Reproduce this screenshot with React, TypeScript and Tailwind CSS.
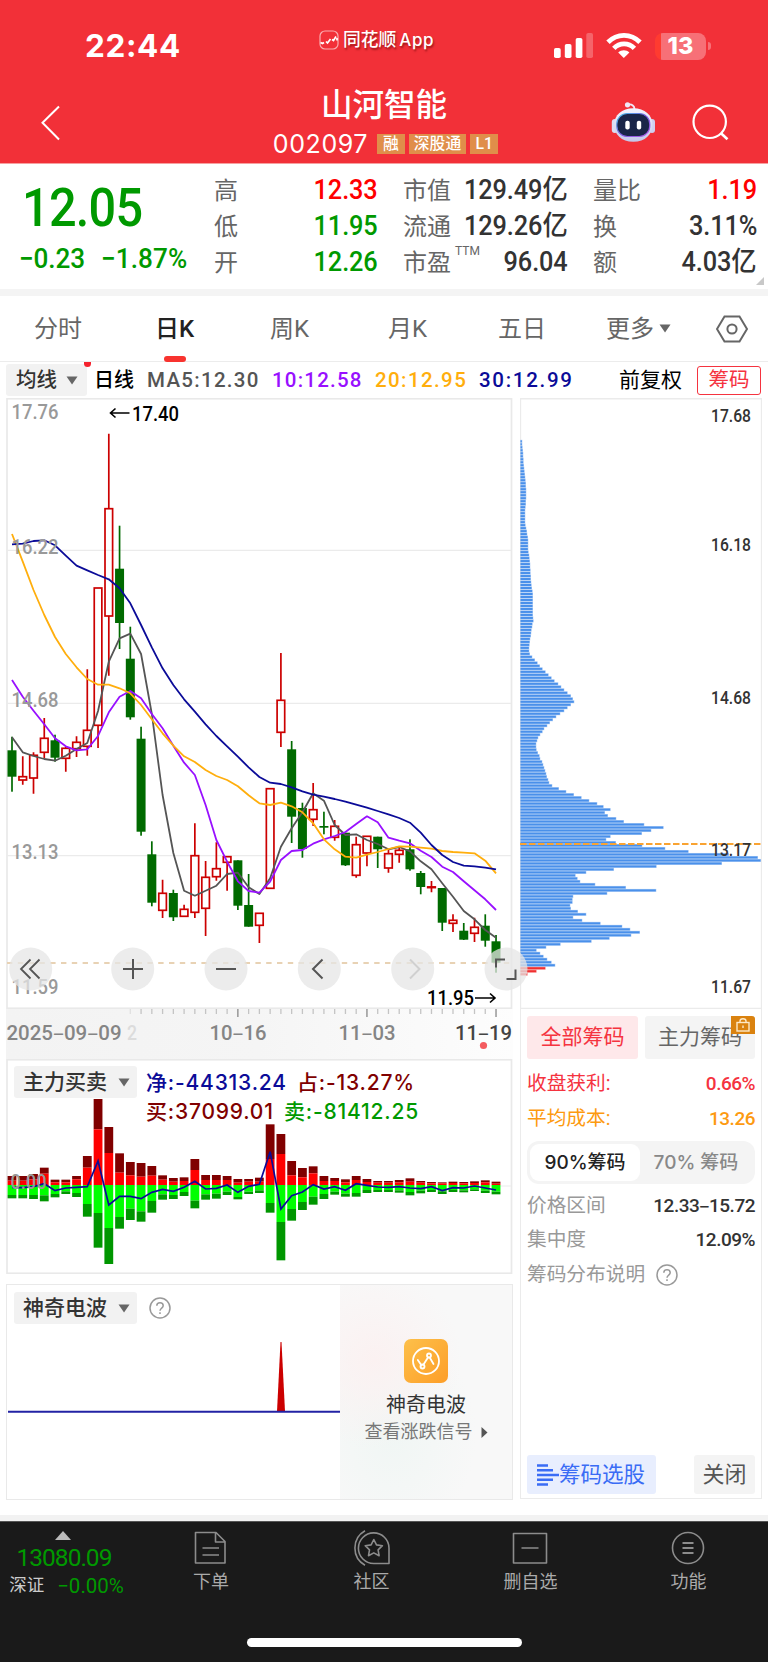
import clsx from "clsx"

type Candle = [kind: 'R' | 'G', high: number, top: number, bottom: number, low: number]

const STEP = 10.756
const cx = (i: number) => 12 + i * STEP

const candles: Candle[] = [
  ['G', 736.7, 750.3, 776.7, 791.7], ['R', 756.3, 776.7, 780, 784.7], ['R', 752.3, 755.3, 778, 793.7],
  ['R', 718, 738.3, 752.3, 758.3], ['G', 734.7, 740.3, 757.7, 761.7], ['R', 746.7, 748.3, 758.3, 771.7],
  ['R', 736.3, 742.3, 748.7, 757], ['R', 669.3, 730.3, 746.3, 755.7], ['R', 588, 588, 725.3, 748],
  ['R', 433.7, 508.7, 616, 675.7], ['G', 525.7, 568.7, 623, 649], ['G', 626.7, 658.7, 717.3, 719.7],
  ['G', 726.7, 738.7, 831.7, 835.7], ['G', 841.3, 854.3, 902.7, 906.3], ['R', 879.7, 893.3, 910.3, 918],
  ['G', 889.7, 893, 917.3, 921], ['R', 904.7, 909.3, 916.3, 917], ['R', 823.3, 855.7, 912.3, 918],
  ['R', 861, 877.3, 908.3, 936], ['R', 842.3, 868.7, 876.7, 880.7], ['R', 856, 856.7, 862.3, 890.7],
  ['G', 860.3, 860.3, 905.7, 910], ['G', 874, 905, 926.7, 926.7], ['R', 913.3, 913.3, 925.3, 943],
  ['R', 788.7, 788.7, 888.3, 888.3], ['R', 653, 700.3, 732.3, 747], ['G', 741, 749.3, 816.7, 843],
  ['G', 802.7, 808, 849, 857.7], ['R', 783, 809.7, 819.3, 826], ['G', 811.7, 826, 827.7, 834.3],
  ['R', 820, 826.3, 837.3, 840.7], ['G', 832.7, 832.7, 865.3, 866], ['R', 836.7, 844.7, 875.3, 877.7],
  ['R', 836.3, 836.3, 853, 866.3], ['G', 836.7, 836.7, 849.3, 868], ['R', 850, 853.7, 868, 872.7],
  ['R', 848, 850.3, 854.3, 862.7], ['G', 839.3, 849.3, 869.3, 870.7], ['G', 871, 873, 887, 894.3],
  ['R', 881, 886.9, 887.6, 892.3], ['G', 888, 888, 922.7, 931], ['R', 914.3, 920.3, 923.3, 932],
  ['G', 923, 930.7, 939.7, 940], ['R', 917.7, 927.3, 933.3, 942], ['G', 914.3, 925.7, 940.7, 946.7],
  ['G', 935, 941.3, 962.7, 972.7],
]

const averages = [
  {
    color: '#555555',
    values: [737.3, 752.3, 756, 759, 760.7, 755.7, 749, 743, 711, 661.7, 638.3, 633.7, 654, 714, 795, 853, 890.7, 895.7, 890.7, 885.7, 874, 872.7, 887.3, 894, 878.3, 846.7, 828.3, 812.3, 793.3, 800.7, 825, 835, 834.3, 840, 844, 849.3, 847, 851.3, 861.3, 869.3, 883.3, 896.7, 911, 919.3, 930, 937.7],
  },
  {
    color: '#9810ff',
    values: [680, 696.7, 710.7, 724.3, 738.3, 746.3, 750.3, 749.3, 736, 712.3, 696.7, 691, 698.3, 714, 728.3, 745.7, 762.7, 775, 805, 840, 861.7, 881.3, 891, 892.7, 881.7, 860, 851, 850, 843.7, 839.3, 836, 832, 824, 816.3, 822.3, 837.7, 840.7, 843.3, 850.7, 857, 866.7, 872, 881.3, 890.3, 899.3, 910],
  },
  {
    color: '#ffae0d',
    values: [534, 561.7, 590, 615, 637, 654, 667.3, 679, 684.7, 684.7, 688.3, 693.3, 705, 719.3, 733.3, 745.7, 756.3, 762, 770, 776, 780, 786.3, 795.3, 803.3, 805, 802.7, 806.3, 812.3, 823.3, 839.3, 849.3, 856.7, 857.7, 854.7, 852, 849, 846.3, 846.7, 847.7, 848.7, 851, 852, 852.7, 853.3, 860.7, 873.3],
  },
  {
    color: '#0b0b98',
    values: [544.3, 543.7, 541, 540.3, 545.3, 555.7, 565.7, 570.3, 575, 579.3, 588.3, 603.3, 625, 647.3, 668.3, 685, 699.3, 711.7, 724.3, 736, 746.3, 756.7, 767.3, 777, 782.7, 784, 787.3, 791.3, 794.7, 796.7, 799, 801.7, 804.7, 807.7, 811, 814.3, 818, 822.7, 832.7, 845, 855, 862, 865.7, 866.3, 867.7, 869.3],
  },
]

// buy total, buy main, sell main, sell total
const flows = [
  [558, 572, 615, 625], [558, 572, 615, 625], [552, 568, 615, 627], [533, 551, 616, 634], [569, 577, 612, 622],
  [569, 577, 604, 612], [558, 568, 609, 621], [498, 533, 642, 680], [327, 418, 669, 773], [411, 489, 714, 822],
  [490, 548, 681, 716], [516, 556, 656, 690], [519, 560, 664, 695], [528, 557, 633, 668], [556, 569, 613, 629],
  [564, 575, 615, 627], [562, 573, 606, 618], [507, 540, 632, 655], [555, 570, 613, 629], [555, 570, 611, 626],
  [558, 570, 605, 615], [567, 578, 621, 628], [567, 575, 605, 612], [563, 575, 601, 609], [403, 507, 639, 668],
  [432, 492, 696, 811], [513, 556, 657, 692], [534, 562, 636, 660], [529, 550, 620, 644], [558, 573, 612, 627],
  [564, 573, 605, 614], [568, 577, 611, 620], [558, 570, 609, 620], [567, 576, 600, 609], [573, 578, 600, 606],
  [573, 578, 600, 606], [570, 577, 601, 608], [565, 575, 606, 616], [573, 578, 602, 610], [576, 580, 600, 606],
  [577, 580, 604, 612], [575, 579, 600, 606], [576, 580, 601, 607], [574, 579, 598, 603], [571, 577, 602, 609],
  [575, 581, 605, 613],
]

const netFlow = [592, 593, 590, 581, 602, 594, 592, 590, 513, 645, 619, 619, 626, 607, 598, 604, 592, 574, 597, 595, 585, 607, 589, 583, 485, 657, 617, 606, 584, 597, 590, 601, 581, 586, 591, 592, 590, 594, 596, 590, 602, 593, 594, 588, 594, 600]

const flowY = (v: number) => 990 + v / 3

// chip volume per price level, three units to a pixel
const chips = [
  4, 4, 5, 6, 7, 7, 8, 8, 9, 10, 11, 12, 13, 14, 15, 15, 16, 16, 16, 16, 15, 15, 14, 13, 13, 13, 13, 13, 14, 16,
  18, 19, 21, 22, 22, 22, 22, 23, 25, 26, 27, 28, 28, 29, 29, 30, 30, 31, 32, 33, 35, 36, 36, 36, 36, 36, 36, 36, 36, 37,
  38, 35, 34, 32, 31, 30, 28, 27, 26, 25, 25, 27, 34, 42, 50, 57, 65, 74, 83, 92, 101, 112, 121, 130, 140, 150, 156, 160,
  150, 140, 130, 118, 106, 96, 87, 79, 70, 65, 58, 52, 49, 46, 46, 47, 51, 56, 58, 64, 67, 70, 73, 76, 78, 82, 85, 94, 114,
  136, 159, 182, 205, 229, 248, 269, 252, 261, 286, 309, 370, 428, 391, 363, 269, 256, 285, 364, 433, 503, 624, 711, 720,
  603, 407, 279, 196, 164, 170, 178, 223, 315, 406, 259, 157, 155, 155, 148, 150, 171, 196, 157, 184, 239, 304, 328, 357,
  331, 266, 212, 119, 76, 47, 58, 68, 79, 92, 103, 74, 47, 20,
]

const quotes = [
  [['高', '12.33', 'up'], ['低', '11.95', 'down'], ['开', '12.26', 'down']],
  [['市值', '129.49亿', ''], ['流通', '129.26亿', ''], ['市盈', '96.04', '']],
  [['量比', '1.19', 'up'], ['换', '3.11%', ''], ['额', '4.03亿', '']],
]

const columnClass = ['ml-[214px] w-[164px]', 'ml-[25px] w-[165px]', 'ml-[25px] w-[164px]']

export default function App() {
  return (
    <main className="w-[768px] h-[1662px] bg-white overflow-hidden font-['Roboto','Noto_Sans_CJK_SC',sans-serif] leading-none text-[#333]">
      <Header />
      <Quote />
      <Tabs />
      <Averages />
      <div className="flex h-[1117px]">
        <div className="ml-[6px] w-[507px]">
          <KLine />
          <DateAxis />
          <FlowPanel />
          <WavePanel />
        </div>
        <ChipPanel />
      </div>
      <BottomNav />
    </main>
  )
}

function Header() {
  return (
    <header className="h-[164px] bg-[#f23038] text-white border-b border-[#f7a0a0]">
      <div className="flex h-[84px] pt-[8px] items-center">
        <div className="ml-[85px] w-[234px] font-['Inter',sans-serif] font-bold text-[31.5px] tracking-[.6px]">22:44</div>
        <div className="flex items-center w-[234px] mb-[12px]">
          <svg width="20" height="20" viewBox="0 0 20 20" fill="none" stroke="white">
            <rect x="1" y="1" width="18" height="18" rx="5" strokeOpacity=".6" strokeWidth="1.2" />
            <path d="M1.5 12.5l2 1 1.5-1M7 11.5l1.5 1.5 3-4M13 9.5l1.5 1 2.5-4M18 8v2.5" strokeWidth="1.7" />
          </svg>
          <span className="ml-[4px] text-[17.8px] font-medium whitespace-pre [text-shadow:1px_2px_2px_rgba(90,0,0,.55)]">同花顺<span className="ml-[3px] tracking-[.6px] font-['Inter',sans-serif] text-[17px]">App</span></span>
        </div>
        <svg className="shrink-0" width="42" height="28" viewBox="552 32 42 28" fill="white">
          <rect x="553" y="48" width="6.7" height="10" rx="1.8" />
          <rect x="563.8" y="44" width="6.7" height="14" rx="1.8" />
          <rect x="574.7" y="38" width="6.7" height="20" rx="1.8" />
          <rect x="585.3" y="33" width="6.7" height="25" rx="1.8" fillOpacity=".25" />
        </svg>
        <svg className="ml-[11px] shrink-0" width="36" height="28" viewBox="605 32 36 28" fill="none" stroke="white" strokeWidth="4.8">
          <path d="M607 42.2c9-9.2 23-9.2 32 0" />
          <path d="M612.8 48.4c5.8-6 14.8-6 20.6 0" />
          <path d="M622.8 57.9l-5.6-5.4c3.1-2.9 8.1-2.9 11.2 0z" fill="white" stroke="none" />
        </svg>
        <div className="ml-[13px] flex items-center">
          <div className="w-[51px] h-[27px] rounded-[8px] overflow-hidden flex items-center justify-center font-['Inter',sans-serif] font-extrabold text-[23.5px] bg-linear-to-r from-[#ff3b30] from-12% to-[#f77077] to-12%">13</div>
          <div className="ml-[2px] w-[3px] h-[8px] rounded-r-[3px] bg-[#f77077]"></div>
        </div>
      </div>

      <div className="flex">
        <svg className="ml-[40px] mt-[20px]" width="22" height="38" viewBox="40 104 22 38" fill="none" stroke="white" strokeWidth="2">
          <path d="M59 106.5L42.5 122.8 59 139.5" />
        </svg>
        <div className="ml-[160px] w-[324px] flex flex-col items-center">
          <div className="mt-[5px] h-[34px] leading-[34px] text-[31.5px] font-medium">山河智能</div>
          <div className="ml-[7px] mt-[9px] flex items-center h-[24px] text-[15.8px]">
            <span className="font-['Inter',sans-serif] text-[25px] w-[96px] tracking-[.6px] mr-[8px]">002097</span>
            <Tag>融</Tag>
            <Tag>深股通</Tag>
            <Tag>L1</Tag>
          </div>
        </div>
        <svg className="ml-[64px] mt-[16px]" width="46" height="44" viewBox="610 100 46 44">
          <defs>
            <linearGradient id="shell" x1="0" y1="0" x2="0" y2="1">
              <stop offset="0" stopColor="#f4f4ff" />
              <stop offset="1" stopColor="#c3c7ea" />
            </linearGradient>
            <linearGradient id="rim" x1="0" y1="0" x2="1" y2="1">
              <stop offset="0" stopColor="#3ec2e8" />
              <stop offset=".5" stopColor="#7a5be0" />
              <stop offset="1" stopColor="#b05be8" />
            </linearGradient>
          </defs>
          <path d="M634.5 109c0-3-2.5-5-6-4.5" fill="none" stroke="#f0e8f8" strokeWidth="1.8" />
          <circle cx="627.5" cy="104.8" r="2.6" fill="#f0e8f8" />
          <rect x="611.8" y="119" width="6" height="14" rx="3" fill="#dcdcf4" />
          <rect x="649" y="119" width="6" height="14" rx="3" fill="#cfcff0" />
          <path d="M633.3 108.3c11.5 0 19.2 7 19.2 16.5s-7.2 17-19.2 17-19.2-7.5-19.2-17 7.7-16.5 19.2-16.5z" fill="url(#shell)" />
          <rect x="616.8" y="113.5" width="33" height="23" rx="10.5" fill="#1a2548" stroke="url(#rim)" strokeWidth="1.2" />
          <rect x="625.3" y="120.8" width="4.4" height="8.8" rx="2" fill="white" />
          <rect x="636.8" y="120.8" width="4.4" height="8.8" rx="2" fill="white" />
        </svg>
        <svg className="ml-[36px] mt-[19px]" width="38" height="40" viewBox="692 103 38 40" fill="none" stroke="white" strokeWidth="2.2">
          <circle cx="709.7" cy="121.8" r="16.2" />
          <path d="M721 133.2l6.5 6" strokeWidth="2.6" />
        </svg>
      </div>
    </header>
  )
}

function Tag({ children }: { children: React.ReactNode }) {
  return <span className="mr-[4px] h-[20px] px-[5px] min-w-[28px] flex items-center justify-center bg-[#e08e4a] font-medium whitespace-nowrap">{children}</span>
}

function Quote() {
  return (
    <section className="relative h-[132px] border-b-[7px] border-[#f4f4f4] flex pt-[8px]">
      <div className="w-0 text-[#009900] whitespace-nowrap">
        <div className="ml-[22px] mt-[9px] w-[135px] origin-left scale-x-[.9] text-[54px] font-medium tracking-[-.8px] h-[49px]">12.05</div>
        <div className="ml-[19px] mt-[15px] flex text-[27.5px] font-medium">
          <span className="shrink-0 w-[82px] origin-left scale-x-[.95] tracking-[-.1px]">−0.23</span>
          <span className="shrink-0 origin-left scale-x-[.95] tracking-[.1px]">−1.87%</span>
        </div>
      </div>
      {quotes.map((rows, c) =>
        <div key={c} className={clsx('shrink-0', columnClass[c])}>
          {rows.map(([label, value, trend]) =>
            <div key={label} className="flex h-[36px] items-center justify-between">
              <span className="flex mt-[1px] text-[24px] text-[#666]">
                {label}
                {label === '市盈' && <sup className="-mt-[6px] ml-[4px] w-0 text-[12px] leading-[12px] top-0">TTM</sup>}
              </span>
              <span className={clsx('text-[27.5px] font-medium origin-right scale-x-[.92] tracking-[-.1px] whitespace-nowrap',
                trend === 'up' && 'text-[#ff0000]', trend === 'down' && 'text-[#009900]')}>{value}</span>
            </div>
          )}
        </div>
      )}
      <svg className="absolute right-[4px] bottom-[4px]" width="8" height="8" viewBox="0 0 8 8" fill="#c8c8c8">
        <path d="M8 0v8H0z" />
      </svg>
    </section>
  )
}

function Tabs() {
  return (
    <nav className="flex h-[66px] items-center border-b border-[#ececec] text-[24px] text-[#666]">
      <span className="ml-[34px] w-[121px]">分时</span>
      <span className="relative w-[115px] font-medium text-[#222]">日K
        <i className="absolute left-[9px] bottom-[-21px] w-[22px] h-[6px] rounded-[3px] bg-[#f8332f]"></i>
      </span>
      <span className="w-[118px]">周K</span>
      <span className="w-[110px]">月K</span>
      <span className="w-[108px]">五日</span>
      <span className="w-[53px]">更多</span>
      <Triangle />
      <svg className="ml-[45px]" width="32" height="28" viewBox="0 0 32 28" fill="none" stroke="#666" strokeWidth="2">
        <path d="M8.5 1.5h15L31 14l-7.5 12.5h-15L1 14z" />
        <circle cx="16" cy="14" r="4.6" />
      </svg>
    </nav>
  )
}

function Triangle() {
  return (
    <svg className="shrink-0" width="12" height="9" viewBox="0 0 12 9" fill="#666">
      <path d="M.5.5h11L6 8.5z" />
    </svg>
  )
}

function Averages() {
  return (
    <div className="flex h-[36px] items-center text-[20.5px]">
      <div className="relative ml-[6px] w-[81px] h-[32px] mr-[7px] bg-[#f2f2f2] rounded-[3px] flex items-center pl-[10px] gap-[9px] text-[20.5px] font-medium">
        均线<Triangle />
        <i className="absolute right-[-4px] top-[-2px] w-[7px] h-[5px] rounded-b-[4px] bg-[#f5222d]"></i>
      </div>
      <span className="w-[53px] font-medium text-black text-[20px]">日线</span>
      <span className="w-[125px] font-medium tracking-[1.3px] text-[#555]">MA5:12.30</span>
      <span className="w-[103px] font-medium tracking-[1.2px] text-[#9810ff]">10:12.58</span>
      <span className="w-[104px] font-medium tracking-[1.4px] text-[#ffae0d]">20:12.95</span>
      <span className="w-[140px] font-medium tracking-[1.7px] text-[#0b0b98]">30:12.99</span>
      <span className="w-[78px] text-black text-[21px]">前复权</span>
      <span className="w-[64px] h-[29px] border border-[#f5333f] rounded-[3px] text-[#f5333f] flex items-center justify-center">筹码</span>
    </div>
  )
}

function PriceText({ x, y, w, size = 20.5, color = '#999', children }: { x: number, y: number, w: number, size?: number, color?: string, children: string }) {
  return <text x={x} y={y} textLength={w} lengthAdjust="spacingAndGlyphs" fontSize={size} fontWeight={500} fill={color}>{children}</text>
}

function KLine() {
  return (
    <div className="relative w-[507px] h-[611px]">
      <svg width="507" height="611" viewBox="6 398 507 611">
        <rect x="7" y="398.75" width="504.5" height="609.5" fill="white" stroke="#e9e9e9" strokeWidth="1.7" />
        {[550.3, 703.3, 855.7].map(y => <path key={y} d={`M7 ${y}H511`} stroke="#ebebeb" strokeWidth="1.2" />)}
        <path d="M7 963H511" stroke="#e8d2b4" strokeWidth="1.9" strokeDasharray="5.4 5.4" />
        {candles.map(([kind, high, top, bottom, low], i) => kind === 'G'
          ? <g key={i} fill="#006a00">
            <rect x={cx(i) - .85} y={high} width="1.7" height={low - high} />
            <rect x={cx(i) - 4.5} y={top} width="9" height={bottom - top} />
          </g>
          : <g key={i} fill="none" stroke="#cc0000" strokeWidth="1.7">
            <path d={`M${cx(i)} ${high}V${top}M${cx(i)} ${bottom}V${low}`} />
            <rect x={cx(i) - 3.8} y={top} width="7.6" height={bottom - top} />
          </g>
        )}
        {averages.map(({ color, values }) =>
          <polyline key={color} fill="none" stroke={color} strokeWidth="1.8" strokeLinejoin="round"
            points={values.map((v, i) => `${cx(i)},${v}`).join(' ')} />
        )}
        <PriceText x={11.5} y={419} w={47}>17.76</PriceText>
        <PriceText x={11.5} y={553.5} w={47}>16.22</PriceText>
        <PriceText x={11.5} y={706.5} w={47}>14.68</PriceText>
        <PriceText x={11.5} y={859} w={47}>13.13</PriceText>
        <PriceText x={11.5} y={993.5} w={47}>11.59</PriceText>
        <PriceText x={132} y={420.5} w={47} color="#000">17.40</PriceText>
        <PriceText x={427} y={1005} w={47} color="#000">11.95</PriceText>
        <path d="M129.5 413H110.5M115.5 408.5L110.5 413l5 4.5M475 998h20M490 993.5l5 4.5-5 4.5" fill="none" stroke="#000" strokeWidth="1.6" />
      </svg>
      <svg className="absolute left-0 top-[548px] z-10" width="524" height="46" viewBox="6 946 524 46" fill="none" stroke="#555" strokeWidth="2">
        {[30.7, 132.7, 226, 319.3, 412.7, 506].map(x => <circle key={x} cx={x} cy="969" r="21.5" fill="#e6e6e6" fillOpacity=".75" stroke="none" />)}
        <path d="M30.5 959.5L21 969l9.5 9.5M39.5 959.5L30 969l9.5 9.5" strokeWidth="1.8" />
        <path d="M123 969h20M133 959v20M216 969h20" />
        <path d="M322.5 959.5L313 969l9.5 9.5" />
        <path d="M410 959.5l9.5 9.5-9.5 9.5" stroke="#d0d0d0" />
        <path d="M505 959.5h-9v8M515.5 969.5v9.5h-9" />
      </svg>
    </div>
  )
}

function DateAxis() {
  return (
    <svg className="block" width="507" height="50" viewBox="6 1009 507 50">
      <defs>
        <linearGradient id="haze">
          <stop offset="0" stopColor="#f3f3f3" />
          <stop offset=".5" stopColor="#f5f5f5" />
          <stop offset="1" stopColor="#fdfdfd" />
        </linearGradient>
      </defs>
      <rect x="6" y="1009" width="507" height="50" fill="url(#haze)" />
      {candles.map((_, i) => i > 10 && (
        <path key={i} d={`M${cx(i)} 1009V${i % 12 === 9 ? 1017 : 1014}`} stroke={i % 12 === 9 ? '#888' : '#c4c4c4'} strokeOpacity={i < 12 ? .4 : 1} strokeWidth="1.3" />
      ))}
      <PriceText x={6.5} y={1040} w={115} size={21} color="#858585">2025‒09‒09</PriceText>
      <PriceText x={127} y={1040} w={10} size={21} color="#dcdcdc">2</PriceText>
      <PriceText x={209.5} y={1040} w={57} size={21} color="#858585">10‒16</PriceText>
      <PriceText x={338.5} y={1040} w={57} size={21} color="#858585">11‒03</PriceText>
      <PriceText x={455} y={1040} w={57} size={21} color="#444">11‒19</PriceText>
      <circle cx="483.5" cy="1045.5" r="3.6" fill="#f45b5f" />
    </svg>
  )
}

function IndicatorPill({ children }: { children: string }) {
  return (
    <div className="w-[123px] h-[32px] pl-[9px] bg-[#f2f2f2] rounded-[3px] flex items-center gap-[11px] text-[21px] font-medium whitespace-nowrap">
      {children}<Triangle />
    </div>
  )
}

function FlowPanel() {
  return (
    <div className="relative w-[507px] h-[215px]">
      <svg className="block" width="507" height="215" viewBox="6 1059 507 215">
        <rect x="7" y="1059.75" width="504.5" height="213.5" fill="white" stroke="#e9e9e9" strokeWidth="1.7" />
        <path d="M7 1186H511" stroke="#ebebeb" strokeWidth="1.2" />
        {flows.map(([a, b, c, d], i) =>
          <g key={i}>
            <rect x={Math.max(cx(i) - 4.4, 7.5)} y={flowY(a)} width="8.8" height={(b - a) / 3} fill="#800000" />
            <rect x={Math.max(cx(i) - 4.4, 7.5)} y={flowY(b)} width="8.8" height={(585 - b) / 3} fill="#ff0000" />
            <rect x={Math.max(cx(i) - 4.4, 7.5)} y={flowY(585)} width="8.8" height={(c - 585) / 3} fill="#00ff00" />
            <rect x={Math.max(cx(i) - 4.4, 7.5)} y={flowY(c)} width="8.8" height={(d - c) / 3} fill="#009600" />
          </g>
        )}
        <polyline fill="none" stroke="#0b0b98" strokeWidth="1.7" points={netFlow.map((v, i) => `${cx(i)},${flowY(v)}`).join(' ')} />
        <PriceText x={10.5} y={1189} w={36}>0.00</PriceText>
      </svg>
      <div className="absolute left-[8px] top-[7px] flex">
        <IndicatorPill>主力买卖</IndicatorPill>
        <div className="ml-[9px] font-['Inter','Noto_Sans_CJK_SC',sans-serif] font-medium text-[21px] tracking-[.8px] whitespace-nowrap">
          <div className="flex h-[33px] items-center text-[#0b0b98]">
            <span className="w-[151px]">净:-44313.24</span>
            <span className="text-[#800000]">占:-13.27%</span>
          </div>
          <div className="flex h-[25px] items-center text-[#800000]">
            <span className="w-[138px]">买:37099.01</span>
            <span className="text-[#009900]">卖:-81412.25</span>
          </div>
        </div>
      </div>
    </div>
  )
}

function Help() {
  return (
    <svg width="22" height="22" viewBox="0 0 22 22" fill="none" stroke="#999" strokeWidth="1.5">
      <circle cx="11" cy="11" r="10" />
      <path d="M7.8 8.8c0-4 6.4-4 6.4 0 0 2.2-3.2 2.4-3.2 5M11 15.3v1.7" />
    </svg>
  )
}

function WavePanel() {
  return (
    <div className="mt-[10px] w-[507px] h-[216px] border-[1.5px] border-[#e9e9e9] flex">
      <div className="relative w-[333px]">
        <div className="flex items-center gap-[12px] pl-[7px] pt-[7px]">
          <IndicatorPill>神奇电波</IndicatorPill>
          <Help />
        </div>
        <svg className="absolute left-0 top-[56px]" width="333" height="74" viewBox="7 1341 333 74">
          <path d="M280.5 1342h1l3.5 69.5h-8z" fill="#cc0000" />
          <path d="M8 1411.7h332" stroke="#2222a4" strokeWidth="2" />
        </svg>
      </div>
      <div className="flex-1 flex flex-col items-center bg-[radial-gradient(ellipse_at_20%_35%,#fbf1f1,transparent_45%),radial-gradient(ellipse_at_30%_70%,#f0f6f4,transparent_50%)] bg-[#f8f8f8]">
        <svg className="mt-[54px]" width="44" height="44" viewBox="0 0 44 44">
          <defs>
            <linearGradient id="gold" x1="0" y1="0" x2="1" y2="1">
              <stop offset="0" stopColor="#fdc04a" />
              <stop offset="1" stopColor="#fd9e28" />
            </linearGradient>
          </defs>
          <rect width="44" height="44" rx="7" fill="url(#gold)" />
          <g fill="none" stroke="white" strokeWidth="1.8">
            <circle cx="22" cy="22" r="13" />
            <path d="M13.8 21l3.8 5.5M19.5 25.5l4.5-7M26 19l3.5 6" strokeLinecap="round" />
            <circle cx="18.5" cy="27.5" r="2" />
            <circle cx="25" cy="16.5" r="2" />
          </g>
        </svg>
        <div className="mt-[11px] text-[20px] leading-[22px]">神奇电波</div>
        <div className="mt-[6px] flex items-center gap-[8px] text-[18px] leading-[20px] text-[#777]">
          查看涨跌信号
          <svg width="7" height="11" viewBox="0 0 7 11" fill="#555"><path d="M.5 0L6.5 5.5.5 11z" /></svg>
        </div>
      </div>
    </div>
  )
}

function ChipPanel() {
  return (
    <aside className="ml-[7px] w-[242px] h-[1101px]">
      <svg className="block" width="242" height="611" viewBox="520 398 242 611">
        <path d="M520.5 1009V398.75H761.5V1009M520 1008.3H762" fill="none" stroke="#ebebeb" strokeWidth="1.3" />
        {chips.map((w, i) => {
          const y = 440.3 + i * 2.994
          const color = i > chips.length - 4 ? '#f03030' : '#4a90ea'
          return (
            <g key={i} fill={color}>
              <rect x="520.5" y={y - .5} width={w / 3 + .5} height="3" fillOpacity=".4" />
              <rect x="520.5" y={y} width={w / 3} height="2" />
            </g>
          )
        })}
        <path d="M520 844H761" stroke="#f9a332" strokeWidth="1.9" strokeDasharray="6.5 2.5" />
        <PriceText x={711} y={421.5} w={40} size={17.5} color="#333">17.68</PriceText>
        <PriceText x={711} y={551} w={40} size={17.5} color="#333">16.18</PriceText>
        <PriceText x={711} y={703.5} w={40} size={17.5} color="#333">14.68</PriceText>
        <PriceText x={711} y={856} w={40} size={17.5} color="#333">13.17</PriceText>
        <PriceText x={711} y={992.5} w={40} size={17.5} color="#333">11.67</PriceText>
      </svg>
      <div className="h-[490px] border-x border-b border-[#ebebeb] px-[6px] flex flex-col text-[19.7px]">
        <div className="mt-[7px] flex justify-between text-[21px]">
          <div className="w-[111px] h-[43px] rounded-[3px] bg-[#fee8ea] text-[#f5333f] flex items-center justify-center">全部筹码</div>
          <div className="relative w-[110px] h-[43px] rounded-[3px] bg-[#f4f4f4] text-[#666] flex items-center justify-center">
            主力筹码
            <span className="absolute right-0 top-0 w-[24px] h-[18px] bg-[#da820f] rounded-tr-[3px] flex justify-center">
              <svg width="14" height="18" viewBox="0 0 14 18" fill="none" stroke="#fde9c8" strokeWidth="1.4">
                <rect x="1" y="6.5" width="12" height="8.5" />
                <path d="M4 6.5v-1.5c0-3 6-3 6 0v1.5M7 9.5v2.5" />
              </svg>
            </span>
          </div>
        </div>
        <ChipRow label="收盘获利:" value="0.66%" className="mt-[7px] text-[#f5333f]" />
        <ChipRow label="平均成本:" value="13.26" className="text-[#fd9a10]" />
        <div className="mt-[5px] h-[43px] p-[3px] rounded-[12px] bg-[#f4f4f4] flex items-center text-[#888] font-medium font-['Inter','Noto_Sans_CJK_SC',sans-serif] text-[19px]">
          <span className="w-[110px] h-[37px] rounded-[9px] bg-white flex items-center justify-center text-[#222]">90%筹码</span>
          <span className="flex-1 text-center">70% 筹码</span>
        </div>
        <ChipRow label="价格区间" value="12.33‒15.72" className="mt-[4px]" muted />
        <ChipRow label="集中度" value="12.09%" className="-mt-[1px]" muted />
        <div className="h-[35px] flex items-center gap-[11px] text-[#999]">筹码分布说明 <Help /></div>
        <div className="mt-auto mb-[4px] flex justify-between text-[21.5px]">
          <div className="w-[129px] h-[39px] rounded-[3px] bg-[#e8eefe] text-[#3a6cf5] flex items-center pl-[10px]">
            <svg width="22" height="22" viewBox="0 0 22 22" stroke="currentColor" strokeWidth="2.4">
              <path d="M0 1.5h11M0 6.2h16M0 11h22M0 15.8h16M0 20.5h11" />
            </svg>
            筹码选股
          </div>
          <div className="w-[61px] h-[39px] rounded-[3px] bg-[#f4f4f4] text-[#555] text-[22px] flex items-center justify-center">关闭</div>
        </div>
      </div>
    </aside>
  )
}

function ChipRow({ label, value, muted, className }: { label: string, value: string, muted?: boolean, className?: string }) {
  return (
    <div className={clsx('h-[35px] flex items-center justify-between', className)}>
      <span className={clsx(muted && 'text-[#999]')}>{label}</span>
      <span className="text-[19px] font-medium tracking-[-.5px]">{value}</span>
    </div>
  )
}

function BottomNav() {
  return (
    <footer className="border-t-[6px] border-[#f2f2f2] h-[147px]">
      <div className="h-[141px] bg-[#1a1a1a] border-t border-[#555] text-[18px] text-[#aaa]">
        <div className="flex h-[116px]">
          <div className="w-[130px] flex flex-col items-center">
            <svg className="mt-[9px] mr-[4px]" width="16" height="9" viewBox="0 0 16 9" fill="#bbb"><path d="M8 0l8 9H0z" /></svg>
            <div className="mr-[2px] mt-[6px] text-[24.5px] tracking-[-1px] text-[#009900]">13080.09</div>
            <div className="ml-[3px] mt-[5px] flex items-center text-[#ccc] text-[17.5px]">深证<span className="ml-[13px] text-[20.5px] text-[#009900]">−0.00%</span></div>
          </div>
          <NavItem label="下单" className="ml-[1px] w-[160px]">
            <path d="M2.5 2.5h20.5l9 9v21.5h-29.5zM22.5 2.5v9.5h9.5M9.5 18h16.5M9.5 25h16.5" />
          </NavItem>
          <NavItem label="社区" className="w-[161px]">
            <path d="M36 33.5V18a15.3 15.3 0 1 0-15.3 15.5zM12 .8a19.8 19.8 0 0 0 0 34.5" />
            <path d="M20.8 9.5l2.7 5.4 5.9.8-4.3 4.1 1 5.9-5.3-2.8-5.3 2.8 1-5.9-4.3-4.1 5.9-.8z" />
          </NavItem>
          <NavItem label="删自选" className="w-[157px]">
            <path d="M1.5 3.5h33v29.5h-33zM9.5 18h17" />
          </NavItem>
          <NavItem label="功能" className="w-[159px]">
            <circle cx="18" cy="18" r="15.5" />
            <path d="M12.5 13h11M12.5 18h11M12.5 23h11" strokeWidth="2" />
          </NavItem>
        </div>
        <div className="mx-auto w-[275px] h-[9px] rounded-full bg-white"></div>
      </div>
    </footer>
  )
}

function NavItem({ label, className, children }: { label: string, className: string, children: React.ReactNode }) {
  return (
    <div className={clsx('flex flex-col items-center', className)}>
      <svg className="mt-[8px]" width="37" height="37" viewBox="0 0 37 37" fill="none" stroke="#8c8c8c" strokeWidth="1.6" strokeLinejoin="round">{children}</svg>
      <span className="mt-[6px]">{label}</span>
    </div>
  )
}
